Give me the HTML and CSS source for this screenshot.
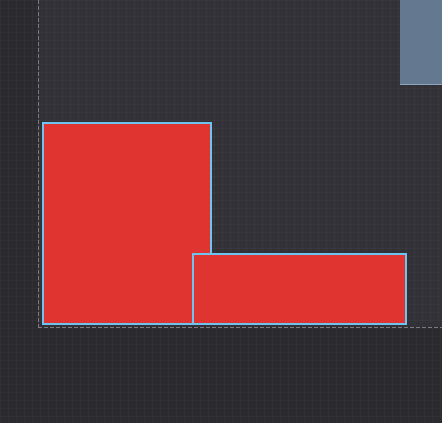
FILE: index.html
```html
<!DOCTYPE html>
<html lang="en">
<head>
    <meta charset="UTF-8">
    <meta name="viewport" content="width=device-width, initial-scale=1.0">
    <title>Layout Canvas</title>
    <link rel="stylesheet" href="styles.css">
</head>
<body>
    <div class="stage">
        <div class="plot"></div>
        <div class="guide guide-v"></div>
        <div class="guide guide-h"></div>

        <!-- shapes on the canvas -->
        <div class="shape shape-red" style="left: 42px; top: 122px; width: 170px; height: 203px;"></div>
        <div class="shape shape-red" style="left: 192px; top: 253px; width: 215px; height: 72px;"></div>
        <div class="shape shape-slate" style="left: 400px; top: 0; width: 42px; height: 85px;"></div>
    </div>
</body>
</html>
```

FILE: styles.css
```css
html, body {
    margin: 0;
    padding: 0;
    background: #2a2a2f;
}

.stage {
    position: relative;
    width: 442px;
    height: 423px;
    overflow: hidden;
    background-color: #2a2a2f;
    background-image:
        linear-gradient(rgba(255, 255, 255, 0.025) 1px, transparent 1px),
        linear-gradient(90deg, rgba(255, 255, 255, 0.025) 1px, transparent 1px);
    background-size: 8px 8px;
}

.plot {
    position: absolute;
    left: 38px;
    top: 0;
    width: 404px;
    height: 327px;
    background-color: #323137;
    background-image:
        linear-gradient(rgba(255, 255, 255, 0.025) 1px, transparent 1px),
        linear-gradient(90deg, rgba(255, 255, 255, 0.025) 1px, transparent 1px);
    background-size: 8px 8px;
}

.guide {
    position: absolute;
}

.guide-v {
    left: 38px;
    top: 0;
    width: 1px;
    height: 328px;
    background: repeating-linear-gradient(180deg, #7c7c80 0 4px, transparent 4px 6px);
}

.guide-h {
    left: 38px;
    top: 327px;
    width: 404px;
    height: 1px;
    background: repeating-linear-gradient(90deg, #7c7c80 0 4px, transparent 4px 6px);
}

.shape {
    position: absolute;
    box-sizing: border-box;
}

.shape-red {
    background: #e03431;
    border: 2px solid #6ec3ef;
}

.shape-slate {
    background: #64788f;
    border-bottom: 1px solid #8ea4bf;
}
```
